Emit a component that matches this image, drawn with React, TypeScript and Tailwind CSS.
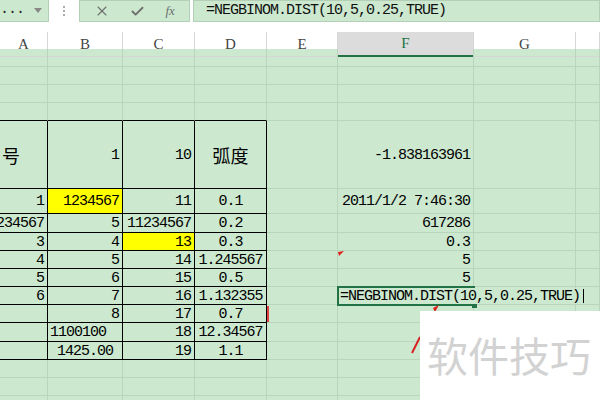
import React from "react";
import { X, Check } from "lucide-react";

type C = { t?: string; a?: "l" | "r" | "c" | "cl"; y?: boolean; br?: boolean; bb?: boolean; cjk?: boolean };

const rows: { h: string; cells: C[] }[] = [
  { h: "h-[18px]", cells: [{}, {}, {}, {}, {}, {}, {}, {}] },
  { h: "h-[18px]", cells: [{}, {}, {}, {}, {}, {}, {}, {}] },
  { h: "h-[18px]", cells: [{}, {}, {}, {}, {}, {}, {}, {}] },
  { h: "h-[18px]", cells: [{ bb: true }, { bb: true }, { bb: true }, { bb: true }, {}, {}, {}, {}] },
  {
    h: "h-[68px]",
    cells: [
      { t: "号", a: "l", br: true, bb: true, cjk: true },
      { t: "1", a: "r", br: true, bb: true },
      { t: "10", a: "r", br: true, bb: true },
      { t: "弧度", a: "c", br: true, bb: true, cjk: true },
      {},
      { t: "-1.838163961", a: "r" },
      {},
      {},
    ],
  },
  {
    h: "h-[25px]",
    cells: [
      { t: "1", a: "r", br: true, bb: true },
      { t: "1234567", a: "r", y: true, br: true, bb: true },
      { t: "11", a: "r", br: true, bb: true },
      { t: "0.1", a: "c", br: true, bb: true },
      {},
      { t: "2011/1/2 7:46:30", a: "r" },
      {},
      {},
    ],
  },
  {
    h: "h-[19px]",
    cells: [
      { t: "1234567", a: "r", br: true, bb: true },
      { t: "5", a: "r", br: true, bb: true },
      { t: "11234567", a: "r", br: true, bb: true },
      { t: "0.2", a: "c", br: true, bb: true },
      {},
      { t: "617286", a: "r" },
      {},
      {},
    ],
  },
  {
    h: "h-[18px]",
    cells: [
      { t: "3", a: "r", br: true, bb: true },
      { t: "4", a: "r", br: true, bb: true },
      { t: "13", a: "r", y: true, br: true, bb: true },
      { t: "0.3", a: "c", br: true, bb: true },
      {},
      { t: "0.3", a: "r" },
      {},
      {},
    ],
  },
  {
    h: "h-[18px]",
    cells: [
      { t: "4", a: "r", br: true, bb: true },
      { t: "5", a: "r", br: true, bb: true },
      { t: "14", a: "r", br: true, bb: true },
      { t: "1.245567", a: "c", br: true, bb: true },
      {},
      { t: "5", a: "r" },
      {},
      {},
    ],
  },
  {
    h: "h-[18px]",
    cells: [
      { t: "5", a: "r", br: true, bb: true },
      { t: "6", a: "r", br: true, bb: true },
      { t: "15", a: "r", br: true, bb: true },
      { t: "0.5", a: "c", br: true, bb: true },
      {},
      { t: "5", a: "r" },
      {},
      {},
    ],
  },
  {
    h: "h-[18px]",
    cells: [
      { t: "6", a: "r", br: true, bb: true },
      { t: "7", a: "r", br: true, bb: true },
      { t: "16", a: "r", br: true, bb: true },
      { t: "1.132355", a: "c", br: true, bb: true },
      {},
      {},
      {},
      {},
    ],
  },
  {
    h: "h-[18px]",
    cells: [
      { br: true, bb: true },
      { t: "8", a: "r", br: true, bb: true },
      { t: "17", a: "r", br: true, bb: true },
      { t: "0.7", a: "c", br: true, bb: true },
      {},
      {},
      {},
      {},
    ],
  },
  {
    h: "h-[19px]",
    cells: [
      { br: true, bb: true },
      { t: "1100100", a: "l", br: true, bb: true },
      { t: "18", a: "r", br: true, bb: true },
      { t: "12.34567", a: "c", br: true, bb: true },
      {},
      {},
      {},
      {},
    ],
  },
  {
    h: "h-[18px]",
    cells: [
      { br: true, bb: true },
      { t: "1425.00", a: "c", br: true, bb: true },
      { t: "19", a: "r", br: true, bb: true },
      { t: "1.1", a: "c", br: true, bb: true },
      {},
      {},
      {},
      {},
    ],
  },
  { h: "h-[18px]", cells: [{}, {}, {}, {}, {}, {}, {}, {}] },
  { h: "h-[18px]", cells: [{}, {}, {}, {}, {}, {}, {}, {}] },
  { h: "h-[18px]", cells: [{}, {}, {}, {}, {}, {}, {}, {}] },
];

function Cell({ c }: { c: C }) {
  const align =
    c.a === "r" ? "justify-end pr-[3px]" : c.a === "l" ? "justify-start pl-[2px]" : c.a === "c" ? "justify-center" : "justify-start";
  return (
    <div
      className={[
        "flex items-center overflow-hidden whitespace-nowrap border-r border-b",
        c.br ? "border-r-black" : "border-r-[#b9d5bc]",
        c.bb ? "border-b-black" : "border-b-[#b9d5bc]",
        c.y ? "bg-[#ffff00]" : "",
        align,
      ].join(" ")}
    >
      {c.t && (
        <span
          className={
            c.cjk
              ? "text-[18px] leading-[20px] text-black [font-family:'Noto_Sans_CJK_SC',sans-serif]"
              : "pt-[2px] text-[15px] leading-[16px] tracking-[-1px] text-black [font-family:'Liberation_Mono',monospace]"
          }
        >
          {c.t}
        </span>
      )}
    </div>
  );
}

const headers = ["A", "B", "C", "D", "E", "F", "G", ""];

export default function App() {
  return (
    <div className="relative w-[600px] h-[400px] overflow-hidden bg-[#cce8cf] [font-family:'Liberation_Mono',monospace]">
      {/* formula bar */}
      <div className="flex h-[22px] bg-white">
        <div className="flex w-[49px] items-center justify-between border-b border-r border-[#b3cfb6] bg-[#cce8cf] pr-[6px]">
          <span className="text-[15px] tracking-[-1px] text-[#222]">...</span>
          <svg width="8" height="5" viewBox="0 0 8 5">
            <polygon points="0,0 8,0 4,5" fill="#888" />
          </svg>
        </div>
        <div className="flex w-[30px] items-center justify-center">
          <div className="flex flex-col gap-[2px]">
            <div className="h-[2px] w-[2px] bg-[#aaa]" />
            <div className="h-[2px] w-[2px] bg-[#aaa]" />
            <div className="h-[2px] w-[2px] bg-[#aaa]" />
          </div>
        </div>
        <div className="flex w-[111px] items-center justify-around border border-[#b3cfb6] bg-[#cce8cf] px-[4px]">
          <X size={16} strokeWidth={1.6} color="#6f6f6f" />
          <Check size={15} strokeWidth={3} color="#6f6f6f" />
          <span className="text-[13px] italic text-[#6f6f6f] [font-family:'Liberation_Serif',serif]">fx</span>
        </div>
        <div className="ml-[3px] flex flex-1 items-center border border-[#b3cfb6] bg-[#cce8cf] pl-[12px]">
          <span className="pt-[1px] text-[15px] tracking-[-1px] text-[#111]">=NEGBINOM.DIST(10,5,0.25,TRUE)</span>
        </div>
      </div>
      <div className="h-[10px] bg-white" />
      {/* column header */}
      <div className="grid h-[17px] grid-cols-[48px_75px_72px_72px_71px_136px_102px_24px] bg-white">
        {headers.map((h, i) => (
          <div
            key={i}
            className={
              h === "F"
                ? "flex items-center justify-center border-r border-[#d6d6d6] border-b-2 border-b-[#217346] bg-[#dcdcdc] text-[15px] text-[#217346] [font-family:'Liberation_Serif',serif]"
                : "flex items-center justify-center border-r border-b border-[#d6d6d6] text-[15px] text-[#444] [font-family:'Liberation_Serif',serif]"
            }
          >
            {h}
          </div>
        ))}
      </div>
      {/* grid rows */}
      {rows.map((r, i) => (
        <div key={i} className={"grid grid-cols-[48px_75px_72px_72px_71px_136px_102px_24px] " + r.h}>
          {r.cells.map((c, j) => (
            <Cell key={j} c={c} />
          ))}
        </div>
      ))}

      {/* active edit cell */}
      <div className="absolute left-[337px] top-[286px] h-[20px] w-[138px] border-2 border-[#217346]" />
      <div className="absolute left-[472px] top-[303px] h-[5px] w-[5px] bg-[#217346]" />
      <div className="absolute left-[340px] top-[288px] flex h-[16px] items-center bg-[#cce8cf]">
        <span className="pt-[2px] text-[15px] leading-[16px] tracking-[-1px] text-black">=NEGBINOM.DIST(10,5,0.25,TRUE)</span>
        <div className="ml-[3px] h-[14px] w-[1px] bg-black" />
      </div>

      {/* red marks */}
      <svg className="absolute left-[338px] top-[251px]" width="6" height="5" viewBox="0 0 6 5">
        <polygon points="0,1 6,0 1,5" fill="#e02020" />
      </svg>
      <div className="absolute left-[267px] top-[306px] h-[16px] w-[2px] bg-[#e04040]" />
      <svg className="absolute left-[432px] top-[305px]" width="7" height="7" viewBox="0 0 7 7">
        <polygon points="1,3 7,0 3,7" fill="#e02020" />
      </svg>
      <svg className="absolute left-[410px] top-[335px]" width="12" height="19" viewBox="0 0 12 19">
        <line x1="2" y1="18" x2="10" y2="2" stroke="#d82020" strokeWidth="2" />
      </svg>

      {/* watermark */}
      <div className="absolute left-[420px] top-[311px] flex h-[89px] w-[180px] items-start bg-white pl-[7px] pt-[18px]">
        <span className="text-[41px] leading-[50px] text-[#d2d2d2] [font-family:'Noto_Sans_CJK_SC',sans-serif]">软件技巧</span>
      </div>
    </div>
  );
}
